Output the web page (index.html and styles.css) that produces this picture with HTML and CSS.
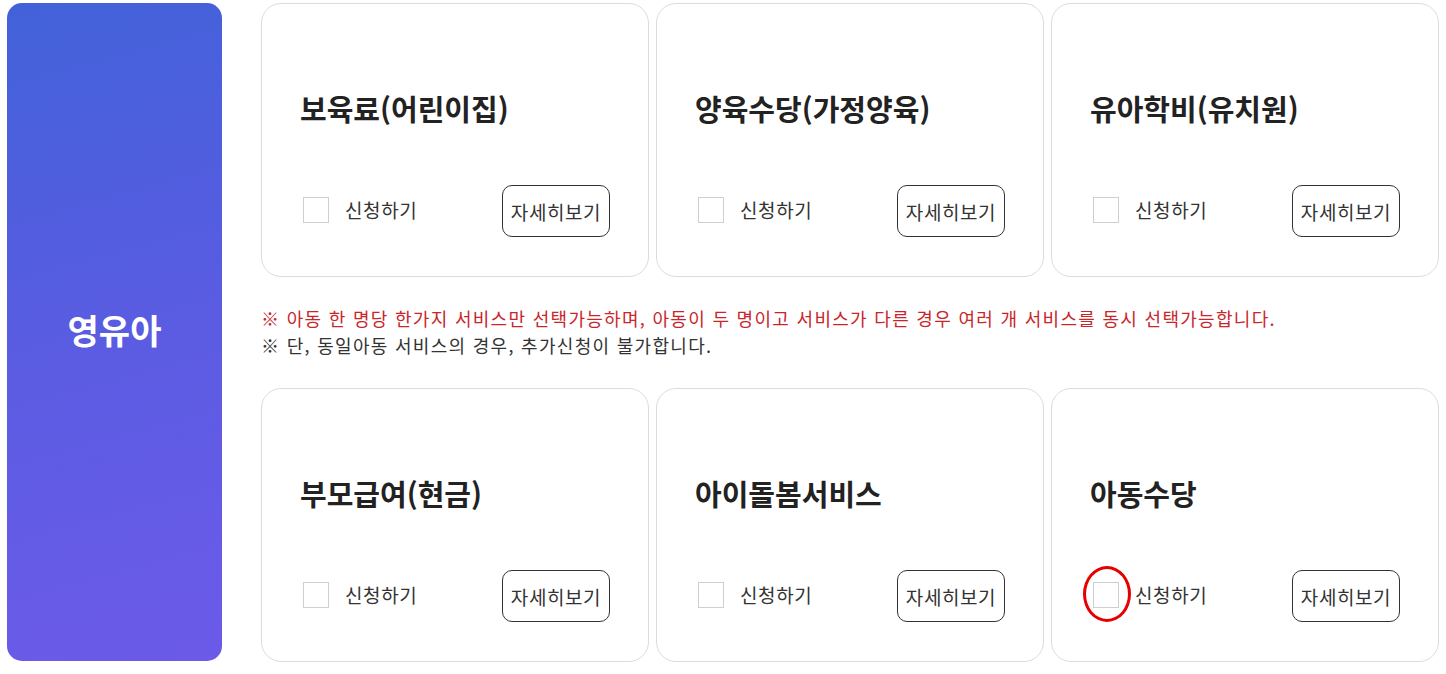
FILE: index.html
```html
<!DOCTYPE html>
<html lang="ko">
<head>
    <meta charset="UTF-8">
    <meta name="viewport" content="width=device-width, initial-scale=1.0">
    <title>영유아 서비스 신청</title>
    <link rel="stylesheet" href="styles.css">
</head>
<body>
    <div class="page">
        <div class="category">영유아</div>

        <div class="service-area">
            <div class="card-grid">
                <div class="card">
                    <h3 class="card-title">보육료(어린이집)</h3>
                    <div class="card-actions">
                        <label class="apply"><span class="check-box"></span>신청하기</label>
                        <button class="detail-btn">자세히보기</button>
                    </div>
                </div>
                <div class="card">
                    <h3 class="card-title">양육수당(가정양육)</h3>
                    <div class="card-actions">
                        <label class="apply"><span class="check-box"></span>신청하기</label>
                        <button class="detail-btn">자세히보기</button>
                    </div>
                </div>
                <div class="card">
                    <h3 class="card-title">유아학비(유치원)</h3>
                    <div class="card-actions">
                        <label class="apply"><span class="check-box"></span>신청하기</label>
                        <button class="detail-btn">자세히보기</button>
                    </div>
                </div>
            </div>

            <div class="notice">
                <p class="notice-red">※ 아동 한 명당 한가지 서비스만 선택가능하며, 아동이 두 명이고 서비스가 다른 경우 여러 개 서비스를 동시 선택가능합니다.</p>
                <p>※ 단, 동일아동 서비스의 경우, 추가신청이 불가합니다.</p>
            </div>

            <div class="card-grid">
                <div class="card">
                    <h3 class="card-title">부모급여(현금)</h3>
                    <div class="card-actions">
                        <label class="apply"><span class="check-box"></span>신청하기</label>
                        <button class="detail-btn">자세히보기</button>
                    </div>
                </div>
                <div class="card">
                    <h3 class="card-title">아이돌봄서비스</h3>
                    <div class="card-actions">
                        <label class="apply"><span class="check-box"></span>신청하기</label>
                        <button class="detail-btn">자세히보기</button>
                    </div>
                </div>
                <div class="card">
                    <h3 class="card-title">아동수당</h3>
                    <div class="card-actions">
                        <label class="apply"><span class="check-box marked"></span>신청하기</label>
                        <button class="detail-btn">자세히보기</button>
                    </div>
                </div>
            </div>
        </div>
    </div>
</body>
</html>
```

FILE: styles.css
```css
body {
    margin: 0;
    padding: 0;
    background: #ffffff;
    font-family: "Noto Sans CJK KR", "Noto Sans", sans-serif;
    color: #222;
}
.page {
    display: flex;
    padding: 3px 7px 0 7px;
    gap: 39px;
}
.category {
    width: 215px;
    height: 658px;
    flex-shrink: 0;
    box-sizing: border-box;
    padding-bottom: 6px;
    border-radius: 15px;
    background: linear-gradient(165deg, #4262d9 0%, #5a5ce2 50%, #6c5ae9 100%);
    color: #fff;
    font-size: 34px;
    font-weight: bold;
    display: flex;
    align-items: center;
    justify-content: center;
}
.service-area {
    width: 1178px;
}
.card-grid {
    display: grid;
    grid-template-columns: repeat(3, 388px);
    gap: 7px;
}
.card {
    height: 274px;
    box-sizing: border-box;
    border: 1px solid #dcdcdc;
    border-radius: 20px;
    padding: 84px 38px 39px 41px;
    display: flex;
    flex-direction: column;
}
.card-title {
    margin: 0 0 0 -3px;
    font-size: 29px;
    font-weight: bold;
    line-height: 40px;
    color: #222;
}
.card-actions {
    margin-top: auto;
    display: flex;
    align-items: center;
    justify-content: space-between;
}
.apply {
    display: flex;
    align-items: center;
    font-size: 19px;
    letter-spacing: 0.6px;
    color: #333;
    margin-top: -3px;
}
.check-box {
    width: 24px;
    height: 24px;
    border: 1px solid #cfcfcf;
    margin-right: 16px;
    position: relative;
}
.check-box.marked::after {
    content: "";
    position: absolute;
    left: -11px;
    top: -17px;
    width: 42px;
    height: 50px;
    border: 3px solid #e60000;
    border-radius: 50%;
}
.detail-btn {
    width: 108px;
    height: 52px;
    border: 1px solid #333;
    border-radius: 10px;
    background: #fff;
    font-family: inherit;
    font-size: 19px;
    letter-spacing: 0.6px;
    color: #333;
    padding: 0;
}
.notice {
    padding: 28px 0 29px 0;
    font-size: 18px;
    letter-spacing: 1.3px;
    line-height: 27px;
    color: #333;
}
.notice p {
    margin: 0;
}
.notice .notice-red {
    color: #c8262b;
}
```
